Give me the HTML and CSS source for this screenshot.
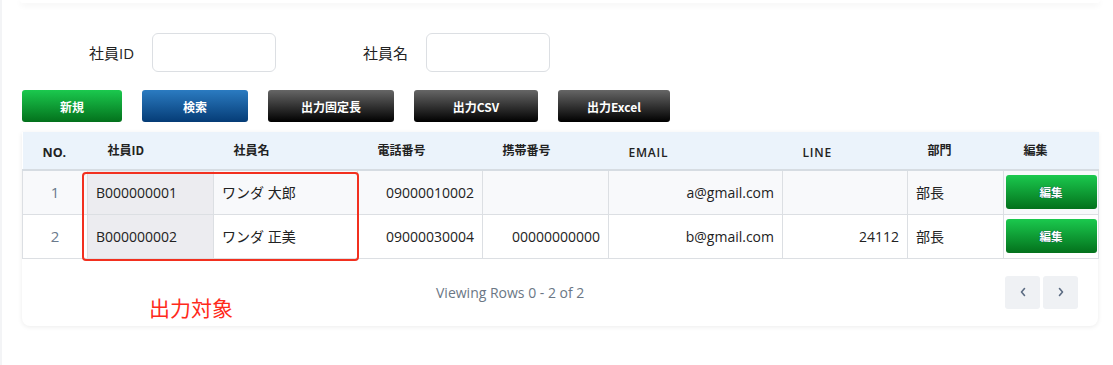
FILE: index.html
```html
<!DOCTYPE html>
<html lang="ja">
<head>
    <meta charset="UTF-8">
    <meta name="viewport" content="width=device-width, initial-scale=1.0">
    <title>社員一覧</title>
    <link rel="stylesheet" href="styles.css">
</head>
<body>
    <div class="frame">
        <div class="top-card"></div>

        <div class="page">
            <!-- 検索条件 -->
            <div class="search-row">
                <label class="field">
                    <span class="field-label">社員ID</span>
                    <input class="field-input" type="text">
                </label>
                <label class="field field-name">
                    <span class="field-label">社員名</span>
                    <input class="field-input" type="text">
                </label>
            </div>

            <div class="btn-row">
                <button class="btn btn-green btn-new">新規</button>
                <button class="btn btn-blue btn-search">検索</button>
                <button class="btn btn-black btn-fixed">出力固定長</button>
                <button class="btn btn-black btn-csv">出力CSV</button>
                <button class="btn btn-black btn-excel">出力Excel</button>
            </div>

            <div class="card">
                <table class="grid">
                    <colgroup>
                        <col style="width:65px">
                        <col style="width:126px">
                        <col style="width:144px">
                        <col style="width:125px">
                        <col style="width:126px">
                        <col style="width:174px">
                        <col style="width:125px">
                        <col style="width:96px">
                        <col style="width:95px">
                    </colgroup>
                    <thead>
                        <tr>
                            <th class="latin">NO.</th>
                            <th>社員ID</th>
                            <th>社員名</th>
                            <th>電話番号</th>
                            <th>携帯番号</th>
                            <th class="latin">EMAIL</th>
                            <th class="latin">LINE</th>
                            <th>部門</th>
                            <th>編集</th>
                        </tr>
                    </thead>
                    <tbody>
                        <tr class="odd">
                            <td class="no">1</td>
                            <td class="id">B000000001</td>
                            <td>ワンダ 大郎</td>
                            <td class="num">09000010002</td>
                            <td class="num"></td>
                            <td class="num">a@gmail.com</td>
                            <td class="num"></td>
                            <td>部長</td>
                            <td class="edit"><button class="btn btn-green btn-edit">編集</button></td>
                        </tr>
                        <tr>
                            <td class="no">2</td>
                            <td class="id">B000000002</td>
                            <td>ワンダ 正美</td>
                            <td class="num">09000030004</td>
                            <td class="num">00000000000</td>
                            <td class="num">b@gmail.com</td>
                            <td class="num">24112</td>
                            <td>部長</td>
                            <td class="edit"><button class="btn btn-green btn-edit">編集</button></td>
                        </tr>
                    </tbody>
                </table>

                <div class="pager">
                    <span class="pager-info">Viewing Rows 0 - 2 of 2</span>
                    <div class="pager-btns">
                        <button class="pg-btn">
                            <svg width="8" height="10" viewBox="0 0 8 10"><path d="M5.5 1.5 2.5 5l3 3.5" fill="none" stroke="#5b6b82" stroke-width="1.6" stroke-linecap="round" stroke-linejoin="round"/></svg>
                        </button>
                        <button class="pg-btn">
                            <svg width="8" height="10" viewBox="0 0 8 10"><path d="M2.5 1.5 5.5 5l-3 3.5" fill="none" stroke="#5b6b82" stroke-width="1.6" stroke-linecap="round" stroke-linejoin="round"/></svg>
                        </button>
                    </div>
                </div>
            </div>

            <!-- 注記 -->
            <div class="mark-box"></div>
            <span class="mark-text">出力対象</span>
        </div>
    </div>
</body>
</html>
```
FILE: styles.css
```css
* {
    box-sizing: border-box;
}

body {
    margin: 0;
    background: #fff;
    font-family: "Open Sans", "Noto Sans CJK JP", sans-serif;
    color: #222;
}

.frame {
    min-height: 365px;
    border-left: 2px solid #f3f4f6;
}

.top-card {
    height: 3px;
    margin: 0 13px 0 18px;
    background: #fff;
    border-radius: 0 0 6px 6px;
    box-shadow: 0 2px 6px rgba(0, 0, 0, 0.07);
}

.page {
    position: relative;
    padding: 30px 13px 0 20px;
}

/* 検索 */
.search-row {
    display: flex;
    align-items: center;
    padding-left: 67px;
}

.field {
    display: flex;
    align-items: center;
    gap: 18px;
}

.field-name {
    margin-left: 87px;
}

.field-label {
    font-size: 15px;
    color: #222;
}

.field-input {
    width: 124px;
    height: 39px;
    border: 1px solid #dcdfe3;
    border-radius: 6px;
    background: #fff;
    outline: none;
}

.btn-row {
    display: flex;
    gap: 20px;
    margin-top: 18px;
}

.btn {
    height: 32px;
    border: none;
    border-radius: 3px;
    color: #fff;
    font-family: "Noto Sans CJK JP", sans-serif;
    font-weight: 700;
    font-size: 12px;
    padding: 0;
    cursor: pointer;
}

.btn-green {
    background: linear-gradient(#1bc94e, #03711c);
}

.btn-blue {
    background: linear-gradient(#2b7bc1, #053c76);
}

.btn-black {
    background: linear-gradient(#666, #000);
}

.btn-new { width: 100px; }
.btn-search { width: 106px; }
.btn-fixed { width: 126px; }
.btn-csv { width: 124px; }
.btn-excel { width: 112px; }

/* 一覧 */
.card {
    margin-top: 10px;
    width: 1076px;
    background: #fff;
    border-radius: 0 0 8px 8px;
    box-shadow: 0 1px 5px rgba(0, 0, 0, 0.08);
}

.grid {
    width: 1076px;
    table-layout: fixed;
    border-collapse: collapse;
}

.grid th {
    height: 38px;
    background: #ebf3fb;
    border-bottom: 2px solid #d6dce2;
    text-align: left;
    padding: 0 0 2px 20px;
    font-family: "Noto Sans CJK JP", sans-serif;
    font-size: 12px;
    font-weight: 700;
    color: #222;
}

.grid th.latin {
    font-family: "Open Sans", sans-serif;
    font-weight: 600;
    letter-spacing: 0.8px;
    padding-top: 6px;
}

.grid th:first-child {
    letter-spacing: 0;
    font-weight: 700;
    font-size: 12.5px;
}

.grid td {
    height: 44px;
    border: 1px solid #dcdfe3;
    padding: 0 8px 0 8px;
    font-size: 14px;
    color: #222;
}

.grid tr.odd td {
    background: #f8f9fb;
}

.grid td.no {
    text-align: center;
    color: #6b7a8c;
    font-size: 15px;
    padding: 0;
}

.grid td.id,
.grid tr.odd td.id {
    background: #ececf0;
}

.grid td.num {
    text-align: right;
}

.grid td.edit {
    padding: 0 1px;
}

.btn-edit {
    display: block;
    width: 91px;
    height: 34px;
    margin: 0 auto;
    font-size: 11.5px;
    text-shadow: 0 0 1px #02245a;
}

.pager {
    display: flex;
    align-items: center;
    justify-content: space-between;
    padding: 17px 20px 17px 414px;
}

.pager-info {
    font-size: 14px;
    color: #6b7785;
    white-space: nowrap;
}

.pager-btns {
    display: flex;
    gap: 3px;
}

.pg-btn {
    width: 35px;
    height: 33px;
    border: none;
    border-radius: 3px;
    background: #eff1f4;
    display: flex;
    align-items: center;
    justify-content: center;
    padding: 0;
}

/* 注記 */
.mark-box {
    position: absolute;
    left: 80px;
    top: 169px;
    width: 277px;
    height: 89px;
    border: 2px solid #f2301f;
    border-radius: 4px;
}

.mark-text {
    position: absolute;
    left: 147px;
    top: 292px;
    font-family: "Noto Sans CJK JP", sans-serif;
    font-size: 21px;
    line-height: 1.2;
    color: #ff2a1a;
}
```
